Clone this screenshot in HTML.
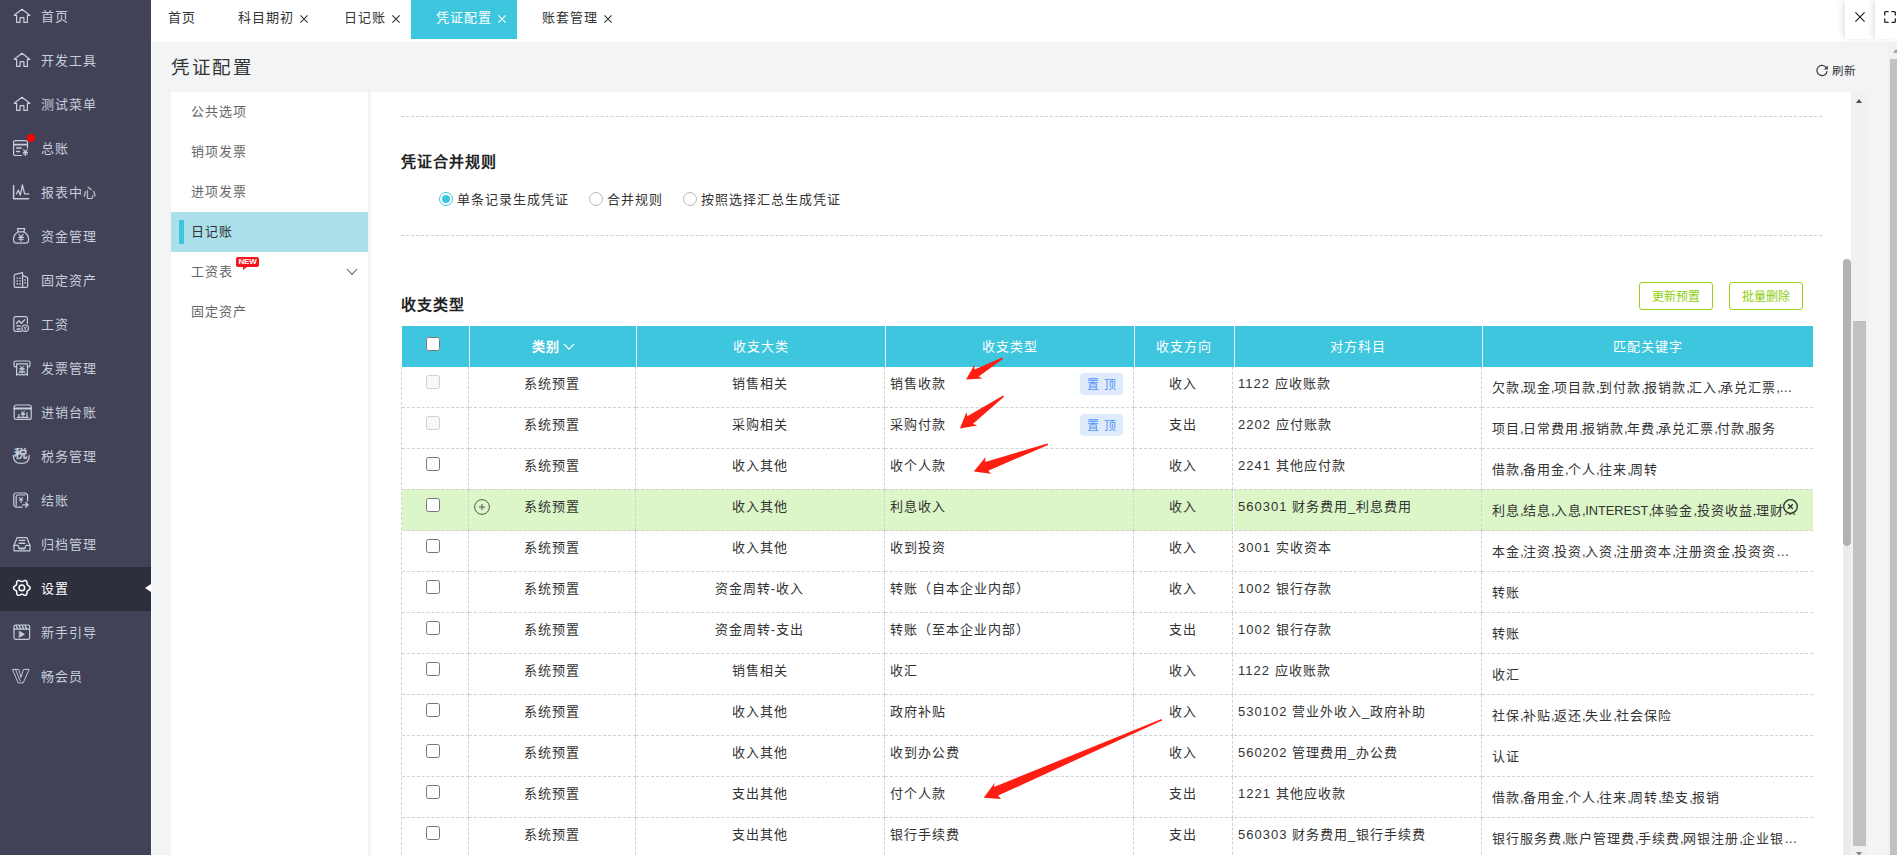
<!DOCTYPE html>
<html lang="zh-CN">
<head>
<meta charset="utf-8">
<title>凭证配置</title>
<style>
*{box-sizing:border-box;margin:0;padding:0}
html,body{width:1897px;height:855px;overflow:hidden;background:#f3f4f6;font-family:"Liberation Sans",sans-serif;}
body{position:relative}
.t{position:absolute;white-space:nowrap}
.abs{position:absolute}
.t i{font-style:normal;letter-spacing:-.57px}
.t b{font-weight:normal;font-size:12.8px;letter-spacing:0}
.ico{position:absolute;overflow:visible}
#side{position:absolute;left:0;top:0;width:151px;height:855px;background:#414257}
#tabs{position:absolute;left:151px;top:0;width:1746px;height:42px;background:#fff}
.cell{position:absolute;border-right:1px dashed #d2d2d2;border-bottom:1px dashed #d2d2d2;height:41px}
.hl{position:absolute;top:326px;width:1px;height:41px;background:#eef1f1}
input[type=checkbox]{position:absolute;margin:0;width:14px;height:14px}
.zd{position:absolute;left:1080px;width:43px;height:22px;border-radius:4px;background:#dfebfd;color:#4f94f7;font-size:12px;line-height:24px;text-align:center;white-space:pre;word-spacing:1.5px}
.btn{position:absolute;top:282px;width:74px;height:28px;border:1px solid #94d40c;border-radius:3px;color:#8fce0a;font-size:12px;line-height:28px;text-align:center;background:#fff}
.radio{position:absolute;top:192px;width:14px;height:14px;border-radius:50%;border:1px solid #b9b9b9;background:#fff}
</style>
</head>
<body>

<div id="side">
<div class="abs" style="left:0;top:567px;width:151px;height:44px;background:#2d2f3c"></div>
<div class="abs" style="left:145px;top:583.5px;width:0;height:0;border-top:4.8px solid transparent;border-bottom:4.8px solid transparent;border-right:6px solid #fff"></div>
<svg class="ico" style="left:12px;top:6px" width="20" height="20" viewBox="0 0 20 20" fill="none" stroke="#c5cedb" stroke-width="1.2" stroke-linejoin="round" stroke-linecap="round"><path d="M2.2 9.3 L10 3.3 L17.8 9.3 H15.4 V16.4 H11.9 V11.6 H8.1 V16.4 H4.6 V9.3 Z"/></svg>
<div class="t" style="left:41px;top:7.0px;font-size:13px;letter-spacing:1px;line-height:20px;color:#c5cedb;">首页</div>
<svg class="ico" style="left:12px;top:50px" width="20" height="20" viewBox="0 0 20 20" fill="none" stroke="#c5cedb" stroke-width="1.2" stroke-linejoin="round" stroke-linecap="round"><path d="M2.2 9.3 L10 3.3 L17.8 9.3 H15.4 V16.4 H11.9 V11.6 H8.1 V16.4 H4.6 V9.3 Z"/></svg>
<div class="t" style="left:41px;top:51.0px;font-size:13px;letter-spacing:1px;line-height:20px;color:#c5cedb;">开发工具</div>
<svg class="ico" style="left:12px;top:94px" width="20" height="20" viewBox="0 0 20 20" fill="none" stroke="#c5cedb" stroke-width="1.2" stroke-linejoin="round" stroke-linecap="round"><path d="M2.2 9.3 L10 3.3 L17.8 9.3 H15.4 V16.4 H11.9 V11.6 H8.1 V16.4 H4.6 V9.3 Z"/></svg>
<div class="t" style="left:41px;top:95.0px;font-size:13px;letter-spacing:1px;line-height:20px;color:#c5cedb;">测试菜单</div>
<svg class="ico" style="left:12px;top:138px" width="20" height="20" viewBox="0 0 20 20" fill="none" stroke="#c5cedb" stroke-width="1.2" stroke-linejoin="round" stroke-linecap="round"><path d="M9.5 17.5 H3.6 Q1.6 17.5 1.6 15.5 V4.6 Q1.6 2.6 3.6 2.6 H13.5 Q15.5 2.6 15.5 4.6 V9.8"/><path d="M1.8 6.6 H15.3" stroke-width="1.6"/><path d="M4.6 10.1 H9.2 M4.6 13.4 H7.4" stroke-width="1.5"/><path d="M11.6 11.6 L13.4 13.9 L15.2 11.6 M13.4 13.9 V17.6 M11.4 14.4 H15.4 M11.4 16 H15.4" stroke-width="1.1"/></svg>
<div class="t" style="left:41px;top:139.0px;font-size:13px;letter-spacing:1px;line-height:20px;color:#c5cedb;">总账</div>
<svg class="ico" style="left:12px;top:182px" width="20" height="20" viewBox="0 0 20 20" fill="none" stroke="#c5cedb" stroke-width="1.2" stroke-linejoin="round" stroke-linecap="round"><path d="M1.6 3.4 V16.8 H16.6" stroke-width="1.5"/><path d="M4.4 12 L6.3 8.2 L8.3 13.2 L10.4 2.8 L12.6 11.9 H16.8" stroke-width="1.3"/></svg>
<div class="t" style="left:41px;top:183.0px;font-size:13px;letter-spacing:1px;line-height:20px;color:#c5cedb;">报表中心</div>
<svg class="ico" style="left:12px;top:226px" width="20" height="20" viewBox="0 0 20 20" fill="none" stroke="#c5cedb" stroke-width="1.2" stroke-linejoin="round" stroke-linecap="round"><path d="M5.4 2.6 H12.7 L11.9 5.8 H6.2 Z"/><path d="M6.2 5.8 C2.6 8 1.5 11.5 1.5 13.6 C1.5 16 2.8 17.2 4.6 17.2 H13.5 C15.3 17.2 16.6 16 16.6 13.6 C16.6 11.5 15.5 8 11.9 5.8"/><path d="M7 8.4 L9.05 11 L11.1 8.4 M9.05 11 V15.2 M6.8 11.4 H11.3 M6.8 13.3 H11.3" stroke-width="1.1"/></svg>
<div class="t" style="left:41px;top:227.0px;font-size:13px;letter-spacing:1px;line-height:20px;color:#c5cedb;">资金管理</div>
<svg class="ico" style="left:12px;top:270px" width="20" height="20" viewBox="0 0 20 20" fill="none" stroke="#c5cedb" stroke-width="1.2" stroke-linejoin="round" stroke-linecap="round"><path d="M2.2 5.6 Q2.2 4.6 3.2 4.3 L10.6 2.6 V17.4 H3.4 Q2.2 17.4 2.2 16.2 Z"/><path d="M10.6 5.4 L15.6 7.6 V16.2 Q15.6 17.4 14.4 17.4 H10.6"/><path d="M4.6 8.2 H6 M7.4 8.2 H8.8 M4.6 11 H6 M7.4 11 H8.8 M4.6 13.9 H6 M7.4 13.9 H8.8 M12.4 10 H13.8 M12.4 12.8 H13.8" stroke-width="1.6" stroke-linecap="butt"/></svg>
<div class="t" style="left:41px;top:271.0px;font-size:13px;letter-spacing:1px;line-height:20px;color:#c5cedb;">固定资产</div>
<svg class="ico" style="left:12px;top:314px" width="20" height="20" viewBox="0 0 20 20" fill="none" stroke="#c5cedb" stroke-width="1.2" stroke-linejoin="round" stroke-linecap="round"><path d="M9.6 17.4 H3.8 Q1.8 17.4 1.8 15.4 V4.6 Q1.8 2.6 3.8 2.6 H13.4 Q15.4 2.6 15.4 4.6 V9.6"/><path d="M4.4 9.6 L7 6.8 L9.4 9.4 L12.6 5.8" stroke-width="1.4"/><path d="M4.6 12 H8.6 M4.6 15 H8.6" stroke-width="1.6" stroke-linecap="butt"/><circle cx="13.2" cy="14.2" r="3.2"/><path d="M12.2 13 L13.2 14.4 L14.2 13 M13.2 14.4 V16" stroke-width="1"/></svg>
<div class="t" style="left:41px;top:315.0px;font-size:13px;letter-spacing:1px;line-height:20px;color:#c5cedb;">工资</div>
<svg class="ico" style="left:12px;top:358px" width="20" height="20" viewBox="0 0 20 20" fill="none" stroke="#c5cedb" stroke-width="1.2" stroke-linejoin="round" stroke-linecap="round"><path d="M4.6 8.8 H3.6 Q2 8.8 2 7.2 V4.6 Q2 3 3.6 3 H16.4 Q18 3 18 4.6 V7.2 Q18 8.8 16.4 8.8 H15.4"/><path d="M4.6 5.8 H15.4 M4.6 5.8 V17.2 L6.4 16 L8.2 17.2 L10 16 L11.8 17.2 L13.6 16 L15.4 17.2 V5.8"/><path d="M8.2 8 L10 10 L11.8 8 M10 10 V13 M7.8 10.4 H12.2 M7.8 11.8 H12.2" stroke-width="1"/><path d="M7.4 14 H12.6" stroke-width="1.4"/></svg>
<div class="t" style="left:41px;top:359.0px;font-size:13px;letter-spacing:1px;line-height:20px;color:#c5cedb;">发票管理</div>
<svg class="ico" style="left:12px;top:402px" width="20" height="20" viewBox="0 0 20 20" fill="none" stroke="#c5cedb" stroke-width="1.2" stroke-linejoin="round" stroke-linecap="round"><rect x="2.2" y="3" width="17" height="14.4" rx="2"/><path d="M2.4 6.6 H19" stroke-width="2"/><path d="M5.4 15.4 H16.2" stroke-width="1.3"/><path d="M7 15 V12.4 M15 15 V10.8" stroke-width="1.2"/><path d="M9.6 9.2 L11 10.9 L12.4 9.2 M11 10.9 V15 M9.4 11.4 H12.6 M9.4 12.6 H12.6" stroke-width="1"/></svg>
<div class="t" style="left:41px;top:403.0px;font-size:13px;letter-spacing:1px;line-height:20px;color:#c5cedb;">进销台账</div>
<svg class="ico" style="left:12px;top:446px" width="20" height="20" viewBox="0 0 20 20" fill="none" stroke="#c5cedb" stroke-width="1.2" stroke-linejoin="round" stroke-linecap="round"><path d="M1.3 9.4 Q1.3 17.4 9.3 17.4 Q17.3 17.4 17.3 9.4" stroke-width="1.25"/><text x="0" y="0" transform="translate(2.3,12.2) scale(1.12,0.95)" font-size="12" font-weight="bold" fill="#c5cedb" stroke="none" font-family="Liberation Sans, sans-serif">税</text></svg>
<div class="t" style="left:41px;top:447.0px;font-size:13px;letter-spacing:1px;line-height:20px;color:#c5cedb;">税务管理</div>
<svg class="ico" style="left:12px;top:490px" width="20" height="20" viewBox="0 0 20 20" fill="none" stroke="#c5cedb" stroke-width="1.2" stroke-linejoin="round" stroke-linecap="round"><path d="M10 17.2 H4 L1.8 15.4 V4.8 Q1.8 3 3.6 3 H13.2 L15.6 4.8 V10.8"/><path d="M4.2 15.2 V6.6 Q4.2 5 5.8 5 H13.2" /><path d="M7.4 7.6 L9 9.8 L10.6 7.6 M9 9.8 V12.4 M7.2 10 H10.8" stroke-width="1.1"/><path d="M10.6 14.8 H16.2 M13.6 12.4 L16.2 14.8 L13.6 17.4" stroke-width="1.3"/></svg>
<div class="t" style="left:41px;top:491.0px;font-size:13px;letter-spacing:1px;line-height:20px;color:#c5cedb;">结账</div>
<svg class="ico" style="left:12px;top:534px" width="20" height="20" viewBox="0 0 20 20" fill="none" stroke="#c5cedb" stroke-width="1.2" stroke-linejoin="round" stroke-linecap="round"><path d="M2 11.4 L5.2 3.6 H14.8 L18 11.4 V16.8 H2 Z"/><path d="M2 11.4 H6.2 L7 14.2 H13 L13.8 11.4 H18"/><path d="M7.2 6.4 H12.8 M7.2 9.3 H12.8" stroke-width="1.4"/><path d="M7.4 14.8 H12.6" stroke-width="1.6"/></svg>
<div class="t" style="left:41px;top:535.0px;font-size:13px;letter-spacing:1px;line-height:20px;color:#c5cedb;">归档管理</div>
<svg class="ico" style="left:12px;top:578px" width="20" height="20" viewBox="0 0 20 20" fill="none" stroke="#ffffff" stroke-width="1.2" stroke-linejoin="round" stroke-linecap="round"><path d="M18.15 9.90 L18.09 10.33 L17.91 10.75 L17.64 11.13 L17.29 11.48 L16.90 11.79 L16.50 12.06 L16.12 12.31 L15.78 12.54 L15.51 12.78 L15.31 13.05 L15.17 13.36 L15.10 13.72 L15.07 14.12 L15.05 14.58 L15.01 15.06 L14.94 15.55 L14.81 16.03 L14.62 16.46 L14.34 16.82 L14.00 17.09 L13.60 17.25 L13.15 17.31 L12.68 17.26 L12.20 17.14 L11.74 16.95 L11.30 16.74 L10.90 16.53 L10.53 16.36 L10.18 16.24 L9.85 16.20 L9.52 16.24 L9.17 16.36 L8.80 16.53 L8.40 16.74 L7.96 16.95 L7.50 17.14 L7.02 17.26 L6.55 17.31 L6.10 17.25 L5.70 17.09 L5.36 16.82 L5.08 16.46 L4.89 16.03 L4.76 15.55 L4.69 15.06 L4.65 14.58 L4.63 14.12 L4.60 13.72 L4.53 13.36 L4.39 13.05 L4.19 12.78 L3.92 12.54 L3.58 12.31 L3.20 12.06 L2.80 11.79 L2.41 11.48 L2.06 11.13 L1.79 10.75 L1.61 10.33 L1.55 9.90 L1.61 9.47 L1.79 9.05 L2.06 8.67 L2.41 8.32 L2.80 8.01 L3.20 7.74 L3.58 7.49 L3.92 7.26 L4.19 7.02 L4.39 6.75 L4.53 6.44 L4.60 6.08 L4.63 5.68 L4.65 5.22 L4.69 4.74 L4.76 4.25 L4.89 3.77 L5.08 3.34 L5.36 2.98 L5.70 2.71 L6.10 2.55 L6.55 2.49 L7.02 2.54 L7.50 2.66 L7.96 2.85 L8.40 3.06 L8.80 3.27 L9.17 3.44 L9.52 3.56 L9.85 3.60 L10.18 3.56 L10.53 3.44 L10.90 3.27 L11.30 3.06 L11.74 2.85 L12.20 2.66 L12.68 2.54 L13.15 2.49 L13.60 2.55 L14.00 2.71 L14.34 2.98 L14.62 3.34 L14.81 3.77 L14.94 4.25 L15.01 4.74 L15.05 5.22 L15.07 5.68 L15.10 6.08 L15.17 6.44 L15.31 6.75 L15.51 7.02 L15.78 7.26 L16.12 7.49 L16.50 7.74 L16.90 8.01 L17.29 8.32 L17.64 8.67 L17.91 9.05 L18.09 9.47 Z" stroke-width="1.5"/><circle cx="9.85" cy="9.9" r="2.8" stroke-width="1.5"/></svg>
<div class="t" style="left:41px;top:579.0px;font-size:13px;letter-spacing:1px;line-height:20px;color:#ffffff;">设置</div>
<svg class="ico" style="left:12px;top:622px" width="20" height="20" viewBox="0 0 20 20" fill="none" stroke="#c5cedb" stroke-width="1.2" stroke-linejoin="round" stroke-linecap="round"><rect x="2" y="3" width="15.6" height="14.4" rx="1.6"/><path d="M2.2 7.2 H17.4" stroke-width="1.3"/><path d="M4.2 3.6 L5.4 6.6 M7.2 3.6 L8.4 6.6 M10.2 3.6 L11.4 6.6 M13.2 3.6 L14.4 6.6" stroke-width="1.4"/><path d="M7.4 9.2 L12.6 12.3 L7.4 15.4 Z" fill="#c5cedb" stroke-width="0.6"/></svg>
<div class="t" style="left:41px;top:623.0px;font-size:13px;letter-spacing:1px;line-height:20px;color:#c5cedb;">新手引导</div>
<svg class="ico" style="left:12px;top:666px" width="20" height="20" viewBox="0 0 20 20" fill="none" stroke="#c5cedb" stroke-width="1.2" stroke-linejoin="round" stroke-linecap="round"><path d="M0.9 3.4 H6.9 L9 11.5 L11.4 3.4 H17.2 L11.2 16.9 H6.5 Z M3.6 3.6 L8.2 14.8" stroke-width="0.95" stroke-linejoin="miter"/></svg>
<div class="t" style="left:41px;top:667.0px;font-size:13px;letter-spacing:1px;line-height:20px;color:#c5cedb;">畅会员</div>
<div class="abs" style="left:27px;top:134px;width:8px;height:8px;border-radius:50%;background:#ff0000"></div>
</div>
<div class="abs" style="left:151px;top:42px;width:1px;height:813px;background:#fbfbfc"></div>
<div id="tabs"></div>
<div class="abs" style="left:411px;top:0;width:106px;height:39px;background:#3dc6dd"></div>
<div class="t" style="left:168px;top:8.0px;font-size:13px;letter-spacing:1px;line-height:20px;color:#333;">首页</div>
<div class="t" style="left:238px;top:8.0px;font-size:13px;letter-spacing:1px;line-height:20px;color:#333;">科目期初</div>
<svg class="ico" style="left:300px;top:15px" width="8" height="8" viewBox="0 0 8 8" stroke="#333" stroke-width="1.1" fill="none"><path d="M0.4 0.4 L7.6 7.6 M7.6 0.4 L0.4 7.6"/></svg>
<div class="t" style="left:344px;top:8.0px;font-size:13px;letter-spacing:1px;line-height:20px;color:#333;">日记账</div>
<svg class="ico" style="left:392px;top:15px" width="8" height="8" viewBox="0 0 8 8" stroke="#333" stroke-width="1.1" fill="none"><path d="M0.4 0.4 L7.6 7.6 M7.6 0.4 L0.4 7.6"/></svg>
<div class="t" style="left:436px;top:8.0px;font-size:13px;letter-spacing:1px;line-height:20px;color:#fff;">凭证配置</div>
<svg class="ico" style="left:498px;top:15px" width="8" height="8" viewBox="0 0 8 8" stroke="#fff" stroke-width="1.1" fill="none"><path d="M0.4 0.4 L7.6 7.6 M7.6 0.4 L0.4 7.6"/></svg>
<div class="t" style="left:542px;top:8.0px;font-size:13px;letter-spacing:1px;line-height:20px;color:#333;">账套管理</div>
<svg class="ico" style="left:604px;top:15px" width="8" height="8" viewBox="0 0 8 8" stroke="#333" stroke-width="1.1" fill="none"><path d="M0.4 0.4 L7.6 7.6 M7.6 0.4 L0.4 7.6"/></svg>
<div class="abs" style="left:1845px;top:0;width:30px;height:39px;background:#fff;box-shadow:-3px 0 6px -1px rgba(0,0,0,.13)"></div>
<div class="abs" style="left:1875px;top:0;width:22px;height:39px;background:#fff;box-shadow:-3px 0 6px -1px rgba(0,0,0,.13)"></div>
<svg class="ico" style="left:1855px;top:12px" width="10" height="10" viewBox="0 0 10 10" stroke="#222" stroke-width="1.2" fill="none"><path d="M0.4 0.4 L9.6 9.6 M9.6 0.4 L0.4 9.6"/></svg>
<svg class="ico" style="left:1884px;top:11px" width="12" height="12" viewBox="0 0 12 12" fill="none" stroke="#222" stroke-width="1.3"><path d="M0.7 4.6 V1.6 Q0.7 0.7 1.6 0.7 H4.6 M7.4 0.7 H10.4 Q11.3 0.7 11.3 1.6 V4.6 M11.3 7.4 V10.4 Q11.3 11.3 10.4 11.3 H7.4 M4.6 11.3 H1.6 Q0.7 11.3 0.7 10.4 V7.4"/></svg>
<div class="t" style="left:171px;top:54.0px;font-size:18.5px;letter-spacing:1.5px;line-height:28px;color:#333;">凭证配置</div>
<svg class="ico" style="left:1816px;top:64px" width="12" height="12" viewBox="0 0 12 12" fill="none" stroke="#333" stroke-width="1.1"><path d="M10.62 4.34 A5.1 5.1 0 1 0 11.08 6.94"/><path d="M11.3 2.1 V4.9 H8.5" stroke-width="1.1" stroke-linejoin="miter"/></svg>
<div class="t" style="left:1832px;top:62.5px;font-size:11.5px;letter-spacing:0.5px;line-height:16px;color:#333;">刷新</div>
<div class="abs" style="left:171px;top:92px;width:197px;height:763px;background:#fff"></div>
<div class="abs" style="left:171px;top:212px;width:197px;height:40px;background:#abe0eb"></div>
<div class="abs" style="left:179px;top:220px;width:5px;height:24px;background:#3dc6dd"></div>
<div class="t" style="left:191px;top:102.0px;font-size:13px;letter-spacing:1px;line-height:20px;color:#666;">公共选项</div>
<div class="t" style="left:191px;top:142.0px;font-size:13px;letter-spacing:1px;line-height:20px;color:#666;">销项发票</div>
<div class="t" style="left:191px;top:182.0px;font-size:13px;letter-spacing:1px;line-height:20px;color:#666;">进项发票</div>
<div class="t" style="left:191px;top:222.0px;font-size:13px;letter-spacing:1px;line-height:20px;color:#333;">日记账</div>
<div class="t" style="left:191px;top:262.0px;font-size:13px;letter-spacing:1px;line-height:20px;color:#666;">工资表</div>
<div class="t" style="left:191px;top:302.0px;font-size:13px;letter-spacing:1px;line-height:20px;color:#666;">固定资产</div>
<div class="abs" style="left:236px;top:257px;width:23px;height:10px;border-radius:2px;background:#f8131c;color:#fff;font-size:8px;line-height:10px;font-weight:bold;text-align:center;letter-spacing:-0.2px">NEW</div>
<div class="abs" style="left:243px;top:267px;width:0;height:0;border-top:3px solid #f8131c;border-right:4px solid transparent"></div>
<svg class="ico" style="left:346px;top:268px" width="12" height="8" viewBox="0 0 12 8" fill="none" stroke="#666" stroke-width="1.1"><path d="M1 1 L6 6.4 L11 1"/></svg>
<div class="abs" style="left:371px;top:92px;width:1480px;height:763px;background:#fff"></div>
<div class="abs" style="left:401px;top:116px;width:1421px;height:0;border-top:1px dashed #d0d0d0"></div>
<div class="abs" style="left:401px;top:235px;width:1421px;height:0;border-top:1px dashed #d0d0d0"></div>
<div class="t" style="left:401px;top:150.0px;font-size:15px;letter-spacing:1px;line-height:24px;color:#222;font-weight:bold;">凭证合并规则</div>
<div class="radio" style="left:439px;border-color:#3dc6dd"><div style="position:absolute;left:2px;top:2px;width:8px;height:8px;border-radius:50%;background:#3dc6dd"></div></div>
<div class="t" style="left:457px;top:189.5px;font-size:13px;letter-spacing:1px;line-height:20px;color:#333;">单条记录生成凭证</div>
<div class="radio" style="left:589px"></div>
<div class="t" style="left:607px;top:189.5px;font-size:13px;letter-spacing:1px;line-height:20px;color:#333;">合并规则</div>
<div class="radio" style="left:683px"></div>
<div class="t" style="left:701px;top:189.5px;font-size:13px;letter-spacing:1px;line-height:20px;color:#333;">按照选择汇总生成凭证</div>
<div class="t" style="left:401px;top:293.0px;font-size:15px;letter-spacing:1px;line-height:24px;color:#222;font-weight:bold;">收支类型</div>
<div class="btn" style="left:1639px">更新预置</div>
<div class="btn" style="left:1729px">批量删除</div>
<div class="abs" style="left:402px;top:326px;width:1411px;height:41px;background:#3dc6dd"></div>
<div class="hl" style="left:469px"></div>
<div class="hl" style="left:636px"></div>
<div class="hl" style="left:885px"></div>
<div class="hl" style="left:1134px"></div>
<div class="hl" style="left:1234px"></div>
<div class="hl" style="left:1482px"></div>
<input type="checkbox" style="left:426px;top:337px">
<div class="t" style="left:532px;top:336.5px;font-size:13px;letter-spacing:1px;line-height:20px;color:#fff;font-weight:bold;">类别</div>
<svg class="ico" style="left:563px;top:343px" width="12" height="8" viewBox="0 0 12 8" fill="none" stroke="#fff" stroke-width="1.2"><path d="M1 1 L6 6.2 L11 1"/></svg>
<div class="t" style="left:636px;top:336.5px;font-size:13px;letter-spacing:1px;line-height:20px;color:#fff;width:249px;text-align:center;">收支大类</div>
<div class="t" style="left:885px;top:336.5px;font-size:13px;letter-spacing:1px;line-height:20px;color:#fff;width:249px;text-align:center;">收支类型</div>
<div class="t" style="left:1134px;top:336.5px;font-size:13px;letter-spacing:1px;line-height:20px;color:#fff;width:100px;text-align:center;">收支方向</div>
<div class="t" style="left:1234px;top:336.5px;font-size:13px;letter-spacing:1px;line-height:20px;color:#fff;width:248px;text-align:center;">对方科目</div>
<div class="t" style="left:1482px;top:336.5px;font-size:13px;letter-spacing:1px;line-height:20px;color:#fff;width:331px;text-align:center;">匹配关键字</div>
<div class="abs" style="left:402px;top:489px;width:1411px;height:2px;background:#dcf6c8"></div>
<div class="abs" style="left:401px;top:367px;width:0;height:488px;border-left:1px dashed #d2d2d2"></div>
<div class="cell" style="left:402px;top:367px;width:67px;"></div>
<div class="cell" style="left:469px;top:367px;width:167px;"></div>
<div class="cell" style="left:636px;top:367px;width:249px;"></div>
<div class="cell" style="left:885px;top:367px;width:249px;"></div>
<div class="cell" style="left:1134px;top:367px;width:99px;"></div>
<div class="cell" style="left:1234px;top:367px;width:248px;"></div>
<div class="cell" style="left:1482px;top:367px;width:331px;border-right:0;"></div>
<input type="checkbox" disabled style="left:426px;top:375px">
<div class="t" style="left:468px;top:374.0px;font-size:13px;letter-spacing:1px;line-height:20px;color:#333;width:167px;text-align:center;">系统预置</div>
<div class="t" style="left:635px;top:374.0px;font-size:13px;letter-spacing:1px;line-height:20px;color:#333;width:249px;text-align:center;">销售相关</div>
<div class="t" style="left:890px;top:374.0px;font-size:13px;letter-spacing:1px;line-height:20px;color:#333;">销售收款</div>
<div class="t" style="left:1133px;top:374.0px;font-size:13px;letter-spacing:1px;line-height:20px;color:#333;width:100px;text-align:center;">收入</div>
<div class="t" style="left:1238px;top:374.0px;font-size:13px;letter-spacing:1px;line-height:20px;color:#333;">1122 应收账款</div>
<div class="t" style="left:1492px;top:378.0px;font-size:13px;letter-spacing:1px;line-height:20px;color:#333;">欠款<i>,</i>现金<i>,</i>项目款<i>,</i>到付款<i>,</i>报销款<i>,</i>汇入<i>,</i>承兑汇票<i>,</i>…</div>
<div class="zd" style="top:373px">置 顶</div>
<div class="cell" style="left:402px;top:408px;width:67px;"></div>
<div class="cell" style="left:469px;top:408px;width:167px;"></div>
<div class="cell" style="left:636px;top:408px;width:249px;"></div>
<div class="cell" style="left:885px;top:408px;width:249px;"></div>
<div class="cell" style="left:1134px;top:408px;width:99px;"></div>
<div class="cell" style="left:1234px;top:408px;width:248px;"></div>
<div class="cell" style="left:1482px;top:408px;width:331px;border-right:0;"></div>
<input type="checkbox" disabled style="left:426px;top:416px">
<div class="t" style="left:468px;top:415.0px;font-size:13px;letter-spacing:1px;line-height:20px;color:#333;width:167px;text-align:center;">系统预置</div>
<div class="t" style="left:635px;top:415.0px;font-size:13px;letter-spacing:1px;line-height:20px;color:#333;width:249px;text-align:center;">采购相关</div>
<div class="t" style="left:890px;top:415.0px;font-size:13px;letter-spacing:1px;line-height:20px;color:#333;">采购付款</div>
<div class="t" style="left:1133px;top:415.0px;font-size:13px;letter-spacing:1px;line-height:20px;color:#333;width:100px;text-align:center;">支出</div>
<div class="t" style="left:1238px;top:415.0px;font-size:13px;letter-spacing:1px;line-height:20px;color:#333;">2202 应付账款</div>
<div class="t" style="left:1492px;top:419.0px;font-size:13px;letter-spacing:1px;line-height:20px;color:#333;">项目<i>,</i>日常费用<i>,</i>报销款<i>,</i>年费<i>,</i>承兑汇票<i>,</i>付款<i>,</i>服务</div>
<div class="zd" style="top:414px">置 顶</div>
<div class="cell" style="left:402px;top:449px;width:67px;"></div>
<div class="cell" style="left:469px;top:449px;width:167px;"></div>
<div class="cell" style="left:636px;top:449px;width:249px;"></div>
<div class="cell" style="left:885px;top:449px;width:249px;"></div>
<div class="cell" style="left:1134px;top:449px;width:99px;"></div>
<div class="cell" style="left:1234px;top:449px;width:248px;"></div>
<div class="cell" style="left:1482px;top:449px;width:331px;border-right:0;"></div>
<input type="checkbox" style="left:426px;top:457px">
<div class="t" style="left:468px;top:456.0px;font-size:13px;letter-spacing:1px;line-height:20px;color:#333;width:167px;text-align:center;">系统预置</div>
<div class="t" style="left:635px;top:456.0px;font-size:13px;letter-spacing:1px;line-height:20px;color:#333;width:249px;text-align:center;">收入其他</div>
<div class="t" style="left:890px;top:456.0px;font-size:13px;letter-spacing:1px;line-height:20px;color:#333;">收个人款</div>
<div class="t" style="left:1133px;top:456.0px;font-size:13px;letter-spacing:1px;line-height:20px;color:#333;width:100px;text-align:center;">收入</div>
<div class="t" style="left:1238px;top:456.0px;font-size:13px;letter-spacing:1px;line-height:20px;color:#333;">2241 其他应付款</div>
<div class="t" style="left:1492px;top:460.0px;font-size:13px;letter-spacing:1px;line-height:20px;color:#333;">借款<i>,</i>备用金<i>,</i>个人<i>,</i>往来<i>,</i>周转</div>
<div class="cell" style="left:402px;top:490px;width:67px;background:#dcf6c8;"></div>
<div class="cell" style="left:469px;top:490px;width:167px;background:#dcf6c8;"></div>
<div class="cell" style="left:636px;top:490px;width:249px;background:#dcf6c8;"></div>
<div class="cell" style="left:885px;top:490px;width:249px;background:#dcf6c8;"></div>
<div class="cell" style="left:1134px;top:490px;width:99px;background:#dcf6c8;"></div>
<div class="cell" style="left:1234px;top:490px;width:248px;background:#dcf6c8;"></div>
<div class="cell" style="left:1482px;top:490px;width:331px;background:#dcf6c8;border-right:0;"></div>
<input type="checkbox" style="left:426px;top:498px">
<div class="t" style="left:468px;top:497.0px;font-size:13px;letter-spacing:1px;line-height:20px;color:#333;width:167px;text-align:center;">系统预置</div>
<div class="t" style="left:635px;top:497.0px;font-size:13px;letter-spacing:1px;line-height:20px;color:#333;width:249px;text-align:center;">收入其他</div>
<div class="t" style="left:890px;top:497.0px;font-size:13px;letter-spacing:1px;line-height:20px;color:#333;">利息收入</div>
<div class="t" style="left:1133px;top:497.0px;font-size:13px;letter-spacing:1px;line-height:20px;color:#333;width:100px;text-align:center;">收入</div>
<div class="t" style="left:1238px;top:497.0px;font-size:13px;letter-spacing:1px;line-height:20px;color:#333;">560301 财务费用_利息费用</div>
<div class="t" style="left:1492px;top:501.0px;font-size:13px;letter-spacing:1px;line-height:20px;color:#333;">利息<i>,</i>结息<i>,</i>入息<i>,</i><b>INTEREST</b><i>,</i>体验金<i>,</i>投资收益<i>,</i>理财…</div>
<div class="cell" style="left:402px;top:531px;width:67px;"></div>
<div class="cell" style="left:469px;top:531px;width:167px;"></div>
<div class="cell" style="left:636px;top:531px;width:249px;"></div>
<div class="cell" style="left:885px;top:531px;width:249px;"></div>
<div class="cell" style="left:1134px;top:531px;width:99px;"></div>
<div class="cell" style="left:1234px;top:531px;width:248px;"></div>
<div class="cell" style="left:1482px;top:531px;width:331px;border-right:0;"></div>
<input type="checkbox" style="left:426px;top:539px">
<div class="t" style="left:468px;top:538.0px;font-size:13px;letter-spacing:1px;line-height:20px;color:#333;width:167px;text-align:center;">系统预置</div>
<div class="t" style="left:635px;top:538.0px;font-size:13px;letter-spacing:1px;line-height:20px;color:#333;width:249px;text-align:center;">收入其他</div>
<div class="t" style="left:890px;top:538.0px;font-size:13px;letter-spacing:1px;line-height:20px;color:#333;">收到投资</div>
<div class="t" style="left:1133px;top:538.0px;font-size:13px;letter-spacing:1px;line-height:20px;color:#333;width:100px;text-align:center;">收入</div>
<div class="t" style="left:1238px;top:538.0px;font-size:13px;letter-spacing:1px;line-height:20px;color:#333;">3001 实收资本</div>
<div class="t" style="left:1492px;top:542.0px;font-size:13px;letter-spacing:1px;line-height:20px;color:#333;">本金<i>,</i>注资<i>,</i>投资<i>,</i>入资<i>,</i>注册资本<i>,</i>注册资金<i>,</i>投资资…</div>
<div class="cell" style="left:402px;top:572px;width:67px;"></div>
<div class="cell" style="left:469px;top:572px;width:167px;"></div>
<div class="cell" style="left:636px;top:572px;width:249px;"></div>
<div class="cell" style="left:885px;top:572px;width:249px;"></div>
<div class="cell" style="left:1134px;top:572px;width:99px;"></div>
<div class="cell" style="left:1234px;top:572px;width:248px;"></div>
<div class="cell" style="left:1482px;top:572px;width:331px;border-right:0;"></div>
<input type="checkbox" style="left:426px;top:580px">
<div class="t" style="left:468px;top:579.0px;font-size:13px;letter-spacing:1px;line-height:20px;color:#333;width:167px;text-align:center;">系统预置</div>
<div class="t" style="left:635px;top:579.0px;font-size:13px;letter-spacing:1px;line-height:20px;color:#333;width:249px;text-align:center;">资金周转-收入</div>
<div class="t" style="left:890px;top:579.0px;font-size:13px;letter-spacing:1px;line-height:20px;color:#333;">转账（自本企业内部）</div>
<div class="t" style="left:1133px;top:579.0px;font-size:13px;letter-spacing:1px;line-height:20px;color:#333;width:100px;text-align:center;">收入</div>
<div class="t" style="left:1238px;top:579.0px;font-size:13px;letter-spacing:1px;line-height:20px;color:#333;">1002 银行存款</div>
<div class="t" style="left:1492px;top:583.0px;font-size:13px;letter-spacing:1px;line-height:20px;color:#333;">转账</div>
<div class="cell" style="left:402px;top:613px;width:67px;"></div>
<div class="cell" style="left:469px;top:613px;width:167px;"></div>
<div class="cell" style="left:636px;top:613px;width:249px;"></div>
<div class="cell" style="left:885px;top:613px;width:249px;"></div>
<div class="cell" style="left:1134px;top:613px;width:99px;"></div>
<div class="cell" style="left:1234px;top:613px;width:248px;"></div>
<div class="cell" style="left:1482px;top:613px;width:331px;border-right:0;"></div>
<input type="checkbox" style="left:426px;top:621px">
<div class="t" style="left:468px;top:620.0px;font-size:13px;letter-spacing:1px;line-height:20px;color:#333;width:167px;text-align:center;">系统预置</div>
<div class="t" style="left:635px;top:620.0px;font-size:13px;letter-spacing:1px;line-height:20px;color:#333;width:249px;text-align:center;">资金周转-支出</div>
<div class="t" style="left:890px;top:620.0px;font-size:13px;letter-spacing:1px;line-height:20px;color:#333;">转账（至本企业内部）</div>
<div class="t" style="left:1133px;top:620.0px;font-size:13px;letter-spacing:1px;line-height:20px;color:#333;width:100px;text-align:center;">支出</div>
<div class="t" style="left:1238px;top:620.0px;font-size:13px;letter-spacing:1px;line-height:20px;color:#333;">1002 银行存款</div>
<div class="t" style="left:1492px;top:624.0px;font-size:13px;letter-spacing:1px;line-height:20px;color:#333;">转账</div>
<div class="cell" style="left:402px;top:654px;width:67px;"></div>
<div class="cell" style="left:469px;top:654px;width:167px;"></div>
<div class="cell" style="left:636px;top:654px;width:249px;"></div>
<div class="cell" style="left:885px;top:654px;width:249px;"></div>
<div class="cell" style="left:1134px;top:654px;width:99px;"></div>
<div class="cell" style="left:1234px;top:654px;width:248px;"></div>
<div class="cell" style="left:1482px;top:654px;width:331px;border-right:0;"></div>
<input type="checkbox" style="left:426px;top:662px">
<div class="t" style="left:468px;top:661.0px;font-size:13px;letter-spacing:1px;line-height:20px;color:#333;width:167px;text-align:center;">系统预置</div>
<div class="t" style="left:635px;top:661.0px;font-size:13px;letter-spacing:1px;line-height:20px;color:#333;width:249px;text-align:center;">销售相关</div>
<div class="t" style="left:890px;top:661.0px;font-size:13px;letter-spacing:1px;line-height:20px;color:#333;">收汇</div>
<div class="t" style="left:1133px;top:661.0px;font-size:13px;letter-spacing:1px;line-height:20px;color:#333;width:100px;text-align:center;">收入</div>
<div class="t" style="left:1238px;top:661.0px;font-size:13px;letter-spacing:1px;line-height:20px;color:#333;">1122 应收账款</div>
<div class="t" style="left:1492px;top:665.0px;font-size:13px;letter-spacing:1px;line-height:20px;color:#333;">收汇</div>
<div class="cell" style="left:402px;top:695px;width:67px;"></div>
<div class="cell" style="left:469px;top:695px;width:167px;"></div>
<div class="cell" style="left:636px;top:695px;width:249px;"></div>
<div class="cell" style="left:885px;top:695px;width:249px;"></div>
<div class="cell" style="left:1134px;top:695px;width:99px;"></div>
<div class="cell" style="left:1234px;top:695px;width:248px;"></div>
<div class="cell" style="left:1482px;top:695px;width:331px;border-right:0;"></div>
<input type="checkbox" style="left:426px;top:703px">
<div class="t" style="left:468px;top:702.0px;font-size:13px;letter-spacing:1px;line-height:20px;color:#333;width:167px;text-align:center;">系统预置</div>
<div class="t" style="left:635px;top:702.0px;font-size:13px;letter-spacing:1px;line-height:20px;color:#333;width:249px;text-align:center;">收入其他</div>
<div class="t" style="left:890px;top:702.0px;font-size:13px;letter-spacing:1px;line-height:20px;color:#333;">政府补贴</div>
<div class="t" style="left:1133px;top:702.0px;font-size:13px;letter-spacing:1px;line-height:20px;color:#333;width:100px;text-align:center;">收入</div>
<div class="t" style="left:1238px;top:702.0px;font-size:13px;letter-spacing:1px;line-height:20px;color:#333;">530102 营业外收入_政府补助</div>
<div class="t" style="left:1492px;top:706.0px;font-size:13px;letter-spacing:1px;line-height:20px;color:#333;">社保<i>,</i>补贴<i>,</i>返还<i>,</i>失业<i>,</i>社会保险</div>
<div class="cell" style="left:402px;top:736px;width:67px;"></div>
<div class="cell" style="left:469px;top:736px;width:167px;"></div>
<div class="cell" style="left:636px;top:736px;width:249px;"></div>
<div class="cell" style="left:885px;top:736px;width:249px;"></div>
<div class="cell" style="left:1134px;top:736px;width:99px;"></div>
<div class="cell" style="left:1234px;top:736px;width:248px;"></div>
<div class="cell" style="left:1482px;top:736px;width:331px;border-right:0;"></div>
<input type="checkbox" style="left:426px;top:744px">
<div class="t" style="left:468px;top:743.0px;font-size:13px;letter-spacing:1px;line-height:20px;color:#333;width:167px;text-align:center;">系统预置</div>
<div class="t" style="left:635px;top:743.0px;font-size:13px;letter-spacing:1px;line-height:20px;color:#333;width:249px;text-align:center;">收入其他</div>
<div class="t" style="left:890px;top:743.0px;font-size:13px;letter-spacing:1px;line-height:20px;color:#333;">收到办公费</div>
<div class="t" style="left:1133px;top:743.0px;font-size:13px;letter-spacing:1px;line-height:20px;color:#333;width:100px;text-align:center;">收入</div>
<div class="t" style="left:1238px;top:743.0px;font-size:13px;letter-spacing:1px;line-height:20px;color:#333;">560202 管理费用_办公费</div>
<div class="t" style="left:1492px;top:747.0px;font-size:13px;letter-spacing:1px;line-height:20px;color:#333;">认证</div>
<div class="cell" style="left:402px;top:777px;width:67px;"></div>
<div class="cell" style="left:469px;top:777px;width:167px;"></div>
<div class="cell" style="left:636px;top:777px;width:249px;"></div>
<div class="cell" style="left:885px;top:777px;width:249px;"></div>
<div class="cell" style="left:1134px;top:777px;width:99px;"></div>
<div class="cell" style="left:1234px;top:777px;width:248px;"></div>
<div class="cell" style="left:1482px;top:777px;width:331px;border-right:0;"></div>
<input type="checkbox" style="left:426px;top:785px">
<div class="t" style="left:468px;top:784.0px;font-size:13px;letter-spacing:1px;line-height:20px;color:#333;width:167px;text-align:center;">系统预置</div>
<div class="t" style="left:635px;top:784.0px;font-size:13px;letter-spacing:1px;line-height:20px;color:#333;width:249px;text-align:center;">支出其他</div>
<div class="t" style="left:890px;top:784.0px;font-size:13px;letter-spacing:1px;line-height:20px;color:#333;">付个人款</div>
<div class="t" style="left:1133px;top:784.0px;font-size:13px;letter-spacing:1px;line-height:20px;color:#333;width:100px;text-align:center;">支出</div>
<div class="t" style="left:1238px;top:784.0px;font-size:13px;letter-spacing:1px;line-height:20px;color:#333;">1221 其他应收款</div>
<div class="t" style="left:1492px;top:788.0px;font-size:13px;letter-spacing:1px;line-height:20px;color:#333;">借款<i>,</i>备用金<i>,</i>个人<i>,</i>往来<i>,</i>周转<i>,</i>垫支<i>,</i>报销</div>
<div class="cell" style="left:402px;top:818px;width:67px;"></div>
<div class="cell" style="left:469px;top:818px;width:167px;"></div>
<div class="cell" style="left:636px;top:818px;width:249px;"></div>
<div class="cell" style="left:885px;top:818px;width:249px;"></div>
<div class="cell" style="left:1134px;top:818px;width:99px;"></div>
<div class="cell" style="left:1234px;top:818px;width:248px;"></div>
<div class="cell" style="left:1482px;top:818px;width:331px;border-right:0;"></div>
<input type="checkbox" style="left:426px;top:826px">
<div class="t" style="left:468px;top:825.0px;font-size:13px;letter-spacing:1px;line-height:20px;color:#333;width:167px;text-align:center;">系统预置</div>
<div class="t" style="left:635px;top:825.0px;font-size:13px;letter-spacing:1px;line-height:20px;color:#333;width:249px;text-align:center;">支出其他</div>
<div class="t" style="left:890px;top:825.0px;font-size:13px;letter-spacing:1px;line-height:20px;color:#333;">银行手续费</div>
<div class="t" style="left:1133px;top:825.0px;font-size:13px;letter-spacing:1px;line-height:20px;color:#333;width:100px;text-align:center;">支出</div>
<div class="t" style="left:1238px;top:825.0px;font-size:13px;letter-spacing:1px;line-height:20px;color:#333;">560303 财务费用_银行手续费</div>
<div class="t" style="left:1492px;top:829.0px;font-size:13px;letter-spacing:1px;line-height:20px;color:#333;">银行服务费<i>,</i>账户管理费<i>,</i>手续费<i>,</i>网银注册<i>,</i>企业银…</div>
<svg class="ico" style="left:474px;top:499px" width="16" height="16" viewBox="0 0 16 16" fill="none" stroke="#555" stroke-width="1"><circle cx="8" cy="8" r="7.4"/><path d="M8 5 V11 M5 8 H11"/></svg>
<svg class="ico" style="left:1783px;top:499px" width="15" height="15" viewBox="0 0 15 15" fill="none" stroke="#2a2a2a" stroke-width="1.25"><circle cx="7.5" cy="7.5" r="6.8"/><path d="M5.2 5.2 L9.8 9.8 M9.8 5.2 L5.2 9.8"/></svg>
<svg class="ico" style="left:0;top:0" width="1897" height="855" viewBox="0 0 1897 855" fill="#fe1e12">
<polygon points="1002.3,357.6 974.6,369.6 974.4,365.1 966.0,379.5 982.3,378.6 978.7,376.5 1003.1,358.8"/>
<polygon points="1003.2,395.5 967.3,416.3 966.5,411.9 959.9,428.5 977.2,425.4 973.0,423.8 1004.0,396.7"/>
<polygon points="1047.5,443.5 985.2,462.0 985.6,457.0 973.8,471.6 990.9,473.7 988.2,470.7 1048.1,444.9"/>
<polygon points="1161.5,719.0 994.0,787.0 994.6,783.0 983.7,797.8 1000.9,798.9 998.1,795.6 1162.1,720.4"/>
</svg>
<div class="abs" style="left:1843px;top:546px;width:8px;height:309px;background:#ebebeb"></div>
<div class="abs" style="left:1843px;top:259px;width:8px;height:287px;border-radius:4px;background:#b2b2b2"></div>
<div class="abs" style="left:1851px;top:92px;width:17px;height:763px;background:#f1f1f1"></div>
<div class="abs" style="left:1853px;top:321px;width:13px;height:525px;background:#c1c1c1"></div>
<div class="abs" style="left:1856px;top:99px;width:0;height:0;border-left:3.5px solid transparent;border-right:3.5px solid transparent;border-bottom:4px solid #505050"></div>
<div class="abs" style="left:1856px;top:852px;width:0;height:0;border-left:3.5px solid transparent;border-right:3.5px solid transparent;border-top:4px solid #8a8a8a"></div>
<div class="abs" style="left:1888px;top:42px;width:9px;height:813px;background:#f1f1f1"></div>
<div class="abs" style="left:1890px;top:59px;width:7px;height:796px;background:#c1c1c1"></div>
<div class="abs" style="left:1893px;top:49px;width:0;height:0;border-left:3.5px solid transparent;border-right:3.5px solid transparent;border-bottom:4px solid #a3a3a3"></div>
</body></html>
